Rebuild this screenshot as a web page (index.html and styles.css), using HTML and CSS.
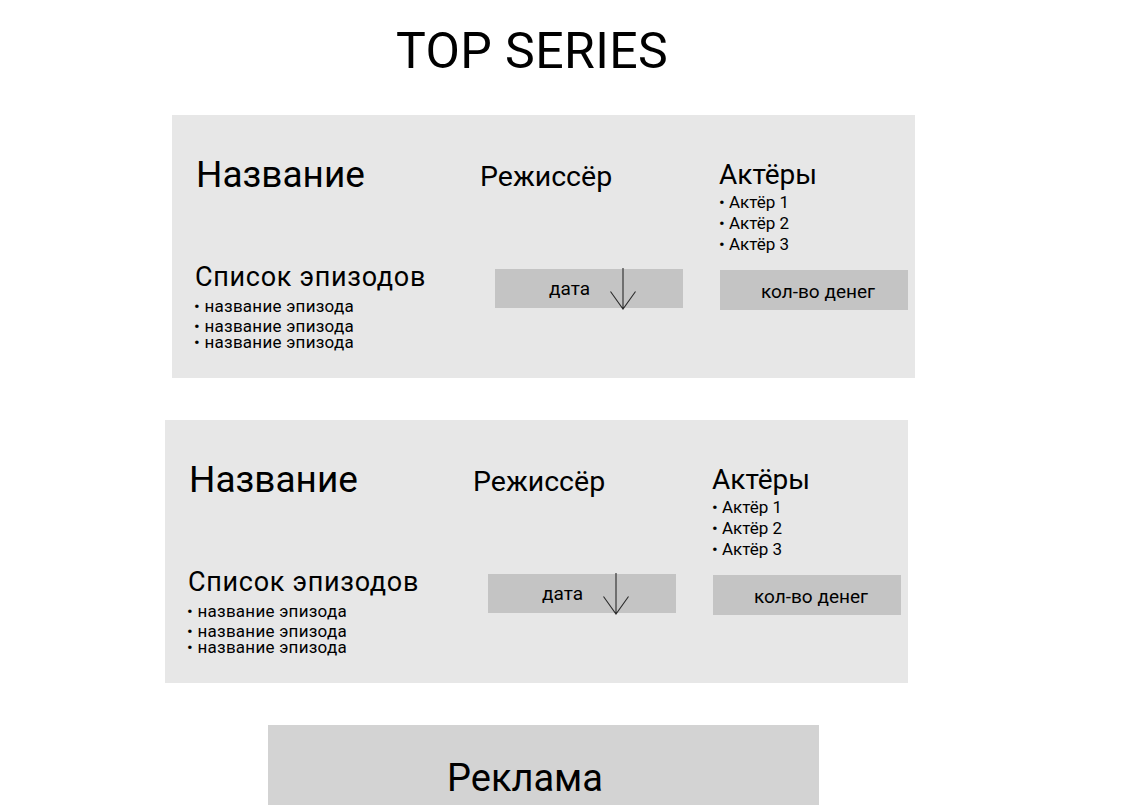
FILE: index.html
```html
<!DOCTYPE html>
<html lang="ru">
<head>
<meta charset="utf-8">
<title>TOP SERIES</title>
<link rel="stylesheet" href="styles.css">
</head>
<body>
<main class="page">
  <h1 class="title">TOP SERIES</h1>

  <section class="card card-first">
    <div class="row row-top">
      <h2 class="name">Название</h2>
      <h3 class="director">Режиссёр</h3>
      <div class="actors">
        <h3 class="actors-title">Актёры</h3>
        <ul class="actor-list">
          <li>• Актёр 1</li>
          <li>• Актёр 2</li>
          <li>• Актёр 3</li>
        </ul>
      </div>
    </div>
    <div class="row row-bottom">
      <div class="episodes">
        <h3 class="episodes-title">Список эпизодов</h3>
        <ul class="episode-list">
          <li>• название эпизода</li>
          <li class="spaced">• название эпизода</li>
          <li>• название эпизода</li>
        </ul>
      </div>
      <div class="date-box">
        <span class="date-text">дата</span>
        <svg class="arrow" width="28" height="43" viewBox="0 0 28 43" aria-hidden="true">
          <path d="M14 0 V41 M1.5 23.5 L14 41 L26.5 23.5" fill="none" stroke="#2b2b2b" stroke-width="1.1"/>
        </svg>
      </div>
      <div class="money-box">кол-во денег</div>
    </div>
  </section>

  <section class="card card-second">
    <div class="row row-top">
      <h2 class="name">Название</h2>
      <h3 class="director">Режиссёр</h3>
      <div class="actors">
        <h3 class="actors-title">Актёры</h3>
        <ul class="actor-list">
          <li>• Актёр 1</li>
          <li>• Актёр 2</li>
          <li>• Актёр 3</li>
        </ul>
      </div>
    </div>
    <div class="row row-bottom">
      <div class="episodes">
        <h3 class="episodes-title">Список эпизодов</h3>
        <ul class="episode-list">
          <li>• название эпизода</li>
          <li class="spaced">• название эпизода</li>
          <li>• название эпизода</li>
        </ul>
      </div>
      <div class="date-box">
        <span class="date-text">дата</span>
        <svg class="arrow" width="28" height="43" viewBox="0 0 28 43" aria-hidden="true">
          <path d="M14 0 V41 M1.5 23.5 L14 41 L26.5 23.5" fill="none" stroke="#2b2b2b" stroke-width="1.1"/>
        </svg>
      </div>
      <div class="money-box">кол-во денег</div>
    </div>
  </section>

  <aside class="ad">Реклама</aside>
</main>
</body>
</html>
```

FILE: styles.css
```css
* {
  box-sizing: border-box;
}

html, body {
  margin: 0;
  padding: 0;
  background: #ffffff;
}

body {
  font-family: Roboto, "Noto Sans", "Liberation Sans", sans-serif;
  color: #000000;
  overflow: hidden;
  height: 805px;
}

.page {
  display: flex;
  flex-direction: column;
  align-items: flex-start;
  padding-top: 21px;
}

.title {
  margin: 0;
  padding-left: 396px;
  font-size: 50px;
  font-weight: 400;
  line-height: 60px;
  letter-spacing: 0.4px;
}

.card {
  width: 743px;
  height: 263px;
  background: #e7e7e7;
  padding-left: 24px;
  display: flex;
  flex-direction: column;
}

.card-first {
  margin-top: 34px;
  margin-left: 172px;
}

.card-second {
  margin-top: 42px;
  margin-left: 165px;
}

.row {
  display: flex;
  align-items: flex-start;
}

.row-top {
  height: 140px;
}

.name {
  margin: 39px 0 0 0;
  width: 284px;
  font-size: 37px;
  font-weight: 400;
  line-height: 42px;
}

.director {
  margin: 45px 0 0 0;
  width: 239px;
  font-size: 28.5px;
  font-weight: 400;
  line-height: 34px;
}

.actors {
  margin-top: 43px;
}

.actors-title {
  margin: 0;
  font-size: 28px;
  font-weight: 400;
  line-height: 34px;
}

.actor-list,
.episode-list {
  list-style: none;
  margin: 0;
  padding: 0;
}

.actor-list li {
  font-size: 17px;
  line-height: 21px;
}

.episodes {
  width: 299px;
  margin-top: 8px;
}

.episodes-title {
  margin: 0 0 0 -1px;
  font-size: 27px;
  font-weight: 400;
  line-height: 29px;
  letter-spacing: 0.7px;
}

.episode-list {
  margin-top: 6px;
  margin-left: -2px;
}

.episode-list li {
  font-size: 17px;
  line-height: 16px;
  letter-spacing: 0.25px;
}

.episode-list li.spaced {
  margin-top: 4px;
}

.date-box {
  position: relative;
  width: 188px;
  height: 39px;
  margin-top: 14px;
  background: #c4c4c4;
  padding-left: 54px;
  font-size: 19px;
  line-height: 39px;
}

.arrow {
  position: absolute;
  left: 114px;
  top: -1px;
  display: block;
}

.money-box {
  width: 188px;
  height: 40px;
  margin-top: 15px;
  margin-left: 37px;
  background: #c4c4c4;
  padding-top: 4px;
  padding-left: 41px;
  font-size: 19px;
  line-height: 36px;
}

.ad {
  margin-top: 42px;
  margin-left: 268px;
  width: 551px;
  height: 100px;
  background: #d3d3d3;
  padding-top: 29px;
  padding-left: 179px;
  font-size: 38px;
  line-height: 48px;
}
```
